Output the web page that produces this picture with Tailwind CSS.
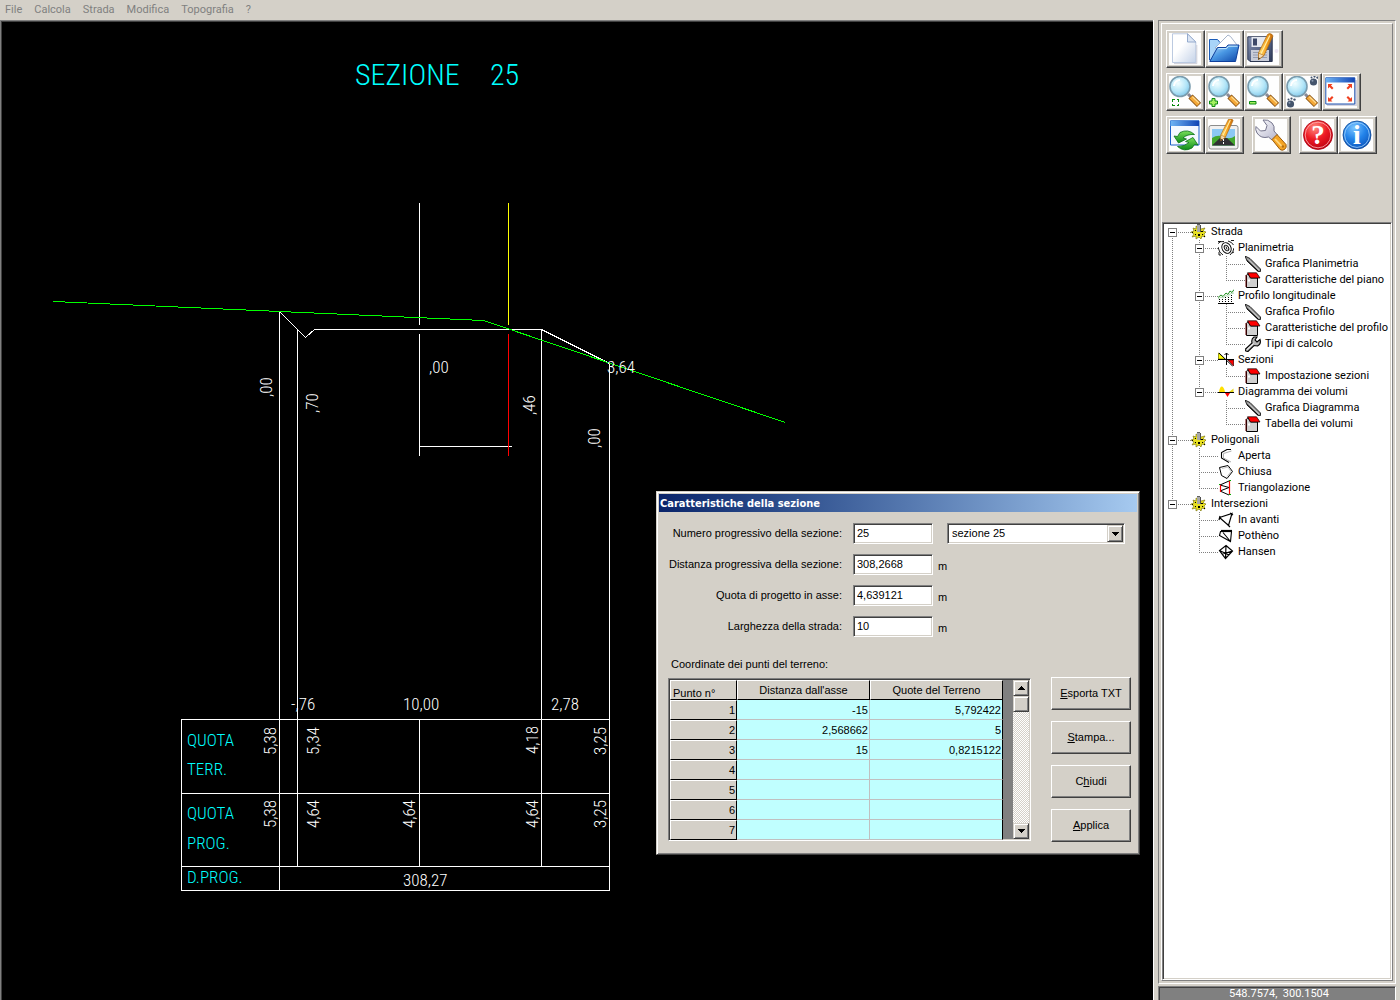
<!DOCTYPE html>
<html lang="it">
<head>
  <meta charset="UTF-8" />
  <meta name="viewport" content="width=device-width, initial-scale=1.0"/>
  <title>Sezione 25</title>
  <script src="https://cdn.jsdelivr.net/npm/@tailwindcss/browser@4"></script>
</head>

<body class="relative flex h-screen flex-col overflow-hidden bg-[#d4d0c8] font-['Roboto',sans-serif] text-[11px] text-black">

  <!-- Menu bar -->
  <nav class="flex h-5 shrink-0 items-center gap-3 px-[5px] text-[#808080]">
    <button>File</button>
    <button>Calcola</button>
    <button>Strada</button>
    <button>Modifica</button>
    <button>Topografia</button>
    <button>?</button>
  </nav>

  <div class="flex min-h-0 flex-1">

    <!-- Drawing area -->
    <main class="min-w-0 flex-1 overflow-hidden border-t border-l border-[#808080] bg-black pt-px pl-px shadow-[inset_1px_1px_0_#404040]">
      <svg class="block h-full w-full" fill="none" stroke-width="1">
        <g transform="translate(-2 -22)">
          <g shape-rendering="crispEdges" stroke="#fff">
            <path d="M419.5 203V325M419.5 334V456M419 446.5H512"/>
            <path d="M279.5 311.5L305.5 337.5L314.5 329.5H541.5L609.5 363.5"/>
            <path d="M279.5 311V890M297.5 329V866M541.5 329V866M609.5 363V890M419.5 719V866"/>
            <path d="M181.5 719.5H609.5V890.5H181.5ZM181 793.5H610M181 866.5H610"/>
            <path stroke="#ff0" d="M508.5 203V325"/>
            <path stroke="#f00" d="M508.5 334V456"/>
            <path stroke="#0f0" d="M53.5 301.5L483.5 320.5L785.5 422.5"/>
          </g>

          <g class="font-['Roboto_Condensed','Liberation_Sans_Narrow',sans-serif] text-[17px] font-light" fill="#fff">
            <text x="429" y="373">,00</text>
            <text x="607" y="373">3,64</text>
            <text x="291" y="710">-,76</text>
            <text x="403" y="710">10,00</text>
            <text x="551" y="710">2,78</text>
            <text x="403" y="886">308,27</text>
            <text transform="translate(272 397) rotate(-90)">,00</text>
            <text transform="translate(318 413) rotate(-90)">,70</text>
            <text transform="translate(535 415) rotate(-90)">,46</text>
            <text transform="translate(600 448) rotate(-90)">,00</text>
            <text transform="translate(276 755) rotate(-90)">5,38</text>
            <text transform="translate(319 755) rotate(-90)">5,34</text>
            <text transform="translate(538 754) rotate(-90)">4,18</text>
            <text transform="translate(606 755) rotate(-90)">3,25</text>
            <text transform="translate(276 828) rotate(-90)">5,38</text>
            <text transform="translate(319 828) rotate(-90)">4,64</text>
            <text transform="translate(415 828) rotate(-90)">4,64</text>
            <text transform="translate(538 828) rotate(-90)">4,64</text>
            <text transform="translate(606 828) rotate(-90)">3,25</text>
          </g>

          <g class="font-['Roboto_Condensed','Liberation_Sans_Narrow',sans-serif] text-[17px] font-light" fill="#0ff">
            <text x="355" y="85" class="text-[30px]">SEZIONE</text>
            <text x="490" y="85" class="text-[30px]">25</text>
            <text x="187" y="746">QUOTA</text>
            <text x="187" y="775">TERR.</text>
            <text x="187" y="819">QUOTA</text>
            <text x="187" y="849">PROG.</text>
            <text x="187" y="883">D.PROG.</text>
          </g>
        </g>
      </svg>
    </main>

    <!-- Side panel -->
    <aside class="flex w-[247px] shrink-0 flex-col border-l border-white pr-1 pl-1">
      <div class="flex min-h-0 flex-1 flex-col border border-t-[#808080] border-r-white border-b-white border-l-[#808080] p-[2px]">
        <div class="flex min-h-0 flex-1 flex-col border border-t-white border-r-[#808080] border-b-[#808080] border-l-white">

          <div id="toolbar" class="flex h-[198px] shrink-0 flex-col gap-[5px] px-1 pt-[6px]"></div>

          <div class="min-h-0 flex-1 overflow-hidden border border-t-[#808080] border-r-white border-b-white border-l-[#808080] bg-white pt-px pl-px shadow-[inset_1px_1px_0_#404040,inset_-1px_-1px_0_#d4d0c8]">
            <ul id="tree"></ul>
          </div>
        </div>
      </div>
      <div class="mt-[2px] h-[14px] shrink-0 border-t border-r border-l border-t-[#808080] border-r-white border-l-[#808080] bg-[#808080] pl-1 text-center leading-[14px] whitespace-pre text-white shadow-[inset_1px_1px_0_#404040]">548.7574,  300.1504</div>
    </aside>
  </div>

  <!-- Section dialog -->
  <section class="absolute top-[491px] left-[656px] w-[484px] border border-t-[#d4d0c8] border-r-[#404040] border-b-[#404040] border-l-[#d4d0c8] bg-[#d4d0c8] p-[2px] font-['Liberation_Sans',sans-serif] shadow-[inset_1px_1px_0_#fff,inset_-1px_-1px_0_#808080]">
    <h1 class="h-[18px] bg-linear-to-r from-[#0a246a] to-[#a6caf0] pl-px font-['DejaVu_Sans_Condensed',sans-serif] leading-5 font-bold text-white">Caratteristiche della sezione</h1>

    <div class="pt-[11px] pr-[6px] pb-[10px] pl-[9px]">
      <form class="flex">
        <div class="grid grid-cols-[180px_80px_9px] items-center gap-x-[5px] gap-y-[10px] whitespace-nowrap">
          <label for="numero" class="pr-[6px] text-right">Numero progressivo della sezione:</label>
          <input id="numero" value="25" class="h-[21px] border border-t-[#808080] border-r-white border-b-white border-l-[#808080] bg-white pr-1 pb-px pl-[3px] shadow-[inset_1px_1px_0_#404040,inset_-1px_-1px_0_#d4d0c8]">
          <span></span>
          <label for="distanza" class="pr-[6px] text-right">Distanza progressiva della sezione:</label>
          <input id="distanza" value="308,2668" class="h-[21px] border border-t-[#808080] border-r-white border-b-white border-l-[#808080] bg-white pr-1 pb-px pl-[3px] shadow-[inset_1px_1px_0_#404040,inset_-1px_-1px_0_#d4d0c8]">
          <span class="pt-1">m</span>
          <label for="quota" class="pr-[6px] text-right">Quota di progetto in asse:</label>
          <input id="quota" value="4,639121" class="h-[21px] border border-t-[#808080] border-r-white border-b-white border-l-[#808080] bg-white pr-1 pb-px pl-[3px] shadow-[inset_1px_1px_0_#404040,inset_-1px_-1px_0_#d4d0c8]">
          <span class="pt-1">m</span>
          <label for="larghezza" class="pr-[6px] text-right">Larghezza della strada:</label>
          <input id="larghezza" value="10" class="h-[21px] border border-t-[#808080] border-r-white border-b-white border-l-[#808080] bg-white pr-1 pb-px pl-[3px] shadow-[inset_1px_1px_0_#404040,inset_-1px_-1px_0_#d4d0c8]">
          <span class="pt-1">m</span>
        </div>
        <div class="relative h-[21px] w-[178px]">
          <select aria-label="Sezione" class="h-full w-full appearance-none border border-t-[#808080] border-r-white border-b-white border-l-[#808080] bg-white pl-1 shadow-[inset_1px_1px_0_#404040,inset_-1px_-1px_0_#d4d0c8]">
            <option>sezione 25</option>
          </select>
          <span class="pointer-events-none absolute top-[2px] right-[2px] flex h-[17px] w-4 items-center justify-center border border-t-[#d4d0c8] border-r-[#404040] border-b-[#404040] border-l-[#d4d0c8] bg-[#d4d0c8] shadow-[inset_1px_1px_0_#fff,inset_-1px_-1px_0_#808080]">
            <svg class="h-1 w-[7px]" viewBox="0 0 7 4" shape-rendering="crispEdges"><path d="M0 0H7V1H6V2H5V3H4V4H3V3H2V2H1V1H0Z"/></svg>
          </span>
        </div>
      </form>

      <p class="mt-5 pl-[3px] leading-[14px]">Coordinate dei punti del terreno:</p>

      <div class="mt-[6px] flex items-center justify-between">
        <div class="flex h-[163px] w-[363px] overflow-hidden border border-t-[#808080] border-r-white border-b-white border-l-[#808080] bg-[#808080] pt-px pl-px shadow-[inset_1px_1px_0_#404040,inset_-1px_-1px_0_#d4d0c8]">
          <table class="h-[160px] w-[333px] table-fixed border-separate border-spacing-0">
            <thead>
              <tr class="h-5">
                <th class="w-[67px] border border-t-white border-r-black border-b-black border-l-white bg-[#d4d0c8] p-0 pt-[6px] pl-[2px] text-left leading-3 font-normal">Punto n°</th>
                <th class="w-[133px] border border-t-white border-r-black border-b-black border-l-white bg-[#d4d0c8] p-0 leading-3 font-normal">Distanza dall'asse</th>
                <th class="w-[133px] border border-t-white border-r-black border-b-black border-l-white bg-[#d4d0c8] p-0 leading-3 font-normal">Quote del Terreno</th>
              </tr>
            </thead>
            <tbody id="punti"></tbody>
          </table>
          <div class="ml-[10px] flex h-[159px] w-4 flex-col bg-[repeating-conic-gradient(#fff_0_25%,#d4d0c8_0_50%)] bg-[length:2px_2px]">
            <button aria-label="Su" class="flex h-4 items-center justify-center border border-t-[#d4d0c8] border-r-[#404040] border-b-[#404040] border-l-[#d4d0c8] bg-[#d4d0c8] shadow-[inset_1px_1px_0_#fff,inset_-1px_-1px_0_#808080]">
              <svg class="h-1 w-[7px]" viewBox="0 0 7 4" shape-rendering="crispEdges"><path d="M0 4H7V3H6V2H5V1H4V0H3V1H2V2H1V3H0Z"/></svg>
            </button>
            <div class="mb-auto h-4 border border-t-[#d4d0c8] border-r-[#404040] border-b-[#404040] border-l-[#d4d0c8] bg-[#d4d0c8] shadow-[inset_1px_1px_0_#fff,inset_-1px_-1px_0_#808080]"></div>
            <button aria-label="Giù" class="flex h-4 items-center justify-center border border-t-[#d4d0c8] border-r-[#404040] border-b-[#404040] border-l-[#d4d0c8] bg-[#d4d0c8] shadow-[inset_1px_1px_0_#fff,inset_-1px_-1px_0_#808080]">
              <svg class="h-1 w-[7px]" viewBox="0 0 7 4" shape-rendering="crispEdges"><path d="M0 0H7V1H6V2H5V3H4V4H3V3H2V2H1V1H0Z"/></svg>
            </button>
          </div>
        </div>
        <div class="flex w-20 flex-col gap-[11px]">
          <button class="h-[33px] border border-t-white border-r-[#404040] border-b-[#404040] border-l-white shadow-[inset_-1px_-1px_0_#808080]"><u>E</u>sporta TXT</button>
          <button class="h-[33px] border border-t-white border-r-[#404040] border-b-[#404040] border-l-white shadow-[inset_-1px_-1px_0_#808080]"><u>S</u>tampa...</button>
          <button class="h-[33px] border border-t-white border-r-[#404040] border-b-[#404040] border-l-white shadow-[inset_-1px_-1px_0_#808080]">C<u>h</u>iudi</button>
          <button class="h-[33px] border border-t-white border-r-[#404040] border-b-[#404040] border-l-white shadow-[inset_-1px_-1px_0_#808080]"><u>A</u>pplica</button>
        </div>
      </div>
    </div>
  </section>

  <!-- Shared gradients -->
  <svg class="absolute h-0 w-0">
    <defs>
      <linearGradient id="gPage" x1="0" y1="0" x2="1" y2="1"><stop offset=".4" stop-color="#fff"/><stop offset="1" stop-color="#c4d2e8"/></linearGradient>
      <linearGradient id="gBlue" x1="0" y1="0" x2="1" y2="1"><stop offset="0" stop-color="#bfe4fb"/><stop offset=".45" stop-color="#4a98e4"/><stop offset="1" stop-color="#0e46a8"/></linearGradient>
      <linearGradient id="gBar" x1="0" y1="0" x2="1" y2="0"><stop offset="0" stop-color="#6fb4f4"/><stop offset="1" stop-color="#1245b4"/></linearGradient>
      <linearGradient id="gDisk" x1="0" y1="0" x2="1" y2="1"><stop offset="0" stop-color="#8492b4"/><stop offset="1" stop-color="#2c3858"/></linearGradient>
      <linearGradient id="gPencil" x1="0" y1="0" x2="1" y2="0"><stop offset="0" stop-color="#ffe07a"/><stop offset=".5" stop-color="#f9a825"/><stop offset="1" stop-color="#c86a08"/></linearGradient>
      <linearGradient id="gSteel" x1="0" y1="0" x2="1" y2="1"><stop offset="0" stop-color="#fff"/><stop offset="1" stop-color="#b4b4cc"/></linearGradient>
      <radialGradient id="gLens" cx=".4" cy=".35" r=".7"><stop offset="0" stop-color="#f2feff"/><stop offset=".6" stop-color="#b4e6f8"/><stop offset="1" stop-color="#7cc4e8"/></radialGradient>
      <radialGradient id="gRed" cx=".4" cy=".25" r=".8"><stop offset="0" stop-color="#ff8a80"/><stop offset=".5" stop-color="#ee1c24"/><stop offset="1" stop-color="#b80010"/></radialGradient>
      <radialGradient id="gInfo" cx=".4" cy=".25" r=".8"><stop offset="0" stop-color="#7cc4ff"/><stop offset=".5" stop-color="#2384ea"/><stop offset="1" stop-color="#0a50b8"/></radialGradient>
      <linearGradient id="gGreen" x1="0" y1="0" x2="0" y2="1"><stop offset="0" stop-color="#7ae05a"/><stop offset="1" stop-color="#0c8a18"/></linearGradient>
    </defs>
  </svg>

  <script>
    const lens = `
      <path d="M19 18L22.5 21.5" stroke="#8a8a96" stroke-width="3"/>
      <path d="M21.5 20.5L30 29" stroke="#8a5414" stroke-width="6"/>
      <path d="M22 21L29.5 28.5" stroke="#f4a838" stroke-width="4"/>
      <path d="M23.5 20.8L30 27" stroke="#ffdc90" stroke-width="1.2"/>
      <circle cx="11" cy="10.5" r="10" fill="url(#gLens)" stroke="#7a9cae" stroke-width="1.6"/>
      <path d="M5 10a6 6 0 0 1 6-6" stroke="#fff" stroke-width="2" fill="none"/>`;
    const pencil = `
      <path d="M20.5 1.5Q22.5-.5 25 1.5L26 3L17 22.5L11.5 26.5L11.5 20Z" fill="url(#gPencil)" stroke="#a86410" stroke-width=".7"/>
      <path d="M22.8 2.4L13.6 21.5" stroke="#fff0a8" stroke-width="1.2"/>
      <path d="M11.5 20L17 22.5L11.5 26.5Z" fill="#f4dcb4" stroke="#a86410" stroke-width=".6"/>
      <path d="M11.4 24.4L13.2 25.2L11.3 26.8Z" fill="#333"/>`;
    const bomb = (x, y) => `<g transform="translate(${x} ${y})" fill="#44546c"><circle r="3.6"/><circle cx="-2" cy="-4.6" r="1"/><circle cx="1" cy="-5.4" r="1.1"/><circle cx="4" cy="-4.4" r="1.2"/><circle cx="-1" cy="-1.2" r="1" fill="#8a9ab0"/></g>`;

    const tools = {
      Nuovo: `<path d="M3.5.8H18.5L26.8 9V29.5H3.5Z" fill="url(#gPage)" stroke="#b4c4dc" stroke-width=".9"/><path d="M18.5.8V9H26.8Z" fill="#dce6f4" stroke="#8ca4c8" stroke-width=".9"/><path d="M5 30.6H27.8V12" stroke="#c8c8d4" stroke-width=".9" fill="none"/>`,
      Apri: `<path d="M1.5 27V6.5H9.5L12 9.5H26V13L8 27Z" fill="#a8d4f8" stroke="#1c5cb8"/><path d="M7 15L20 2L22.5 3.5L29 12L24 17Z" fill="#fff" stroke="#9cacc4" stroke-width=".9"/><path d="M9.5 14.5H18L20 12H31L27.5 28.5H1.8Z" fill="url(#gBlue)" stroke="#0e3f9c"/><path d="M10.3 15.6H18.5L20.5 13.2H29.6" stroke="#c8ecff" fill="none"/>`,
      Salva: `<path d="M.8 3.8H25.2V28.5H3L.8 26.3Z" fill="url(#gDisk)" stroke="#2c3650"/><path d="M4.5 4H21V14H4.5Z" fill="#e4e8f0"/><path d="M6 5.5H10V12.5H6Z" fill="#3c4868"/><path d="M4 17H22V28H4Z" fill="#c8ccd8"/><path d="M6 19.5H20M6 22H20M6 24.5H20" stroke="#8890a8" stroke-width=".8"/><circle cx="29.5" cy="18" r="2" fill="#ece4f4"/>${pencil}`,
      'Zoom finestra': `${lens}<path d="M3.5 25.5V23.5H5.5M7.5 23.5H9.5V25.5M9.5 27.5V29.5H7.5M5.5 29.5H3.5V27.5" stroke="#0a8a10" fill="none" shape-rendering="crispEdges"/>`,
      'Zoom avanti': `${lens}<path d="M4.5 23.5H7.5V26H10V29H7.5V31.5H4.5V29H2V26H4.5Z" transform="translate(-.5 -1)" fill="#a4f060" stroke="#0a8a10"/>`,
      'Zoom indietro': `${lens}<path d="M2.5 25.5H9V28H2.5Z" fill="#a4f060" stroke="#0a8a10"/>`,
      'Zoom dinamico': `${lens}${bomb(27.5, 6)}${bomb(4.5, 28)}`,
      'Zoom estensione': `<path d="M2 4H32V30H2Z" fill="#d4d4e0"/><path d="M.8 1.8H29.8V28H.8Z" fill="#fff" stroke="#1c50b0"/><path d="M.8 1.8H29.8V6.5H.8Z" fill="url(#gBar)"/><g fill="#f04020"><path d="M3 8H7.5L6 9.5L8.5 12L7 13.5L4.5 11L3 12.5ZM27 8V12.5L25.5 11L23 13.5L21.5 12L24 9.5L22.5 8ZM3 25.5V21L4.5 22.5L7 20L8.5 21.5L6 24L7.5 25.5ZM27 25.5H22.5L24 24L21.5 21.5L23 20L25.5 22.5L27 21Z"/></g>`,
      Aggiorna: `<path d="M1.5 1.8H30V26H1.5Z" fill="#f4f8ff" stroke="#1c60c8"/><path d="M1.5 1.8H30V7H1.5Z" fill="url(#gBar)"/><g fill="url(#gGreen)" stroke="#087014" stroke-width=".8"><path d="M25.5 15.5Q19 9.5 11 13.5L8.5 17.5L5 17L9.5 24L17.5 20L14 19Q18 15 25.5 15.5Z"/><path d="M8.5 27.5Q15 33.5 23 29L25.5 25.5L29 26L24 18.5L16.5 22.5L20 23.5Q16 27.5 8.5 27.5Z"/></g>`,
      Immagine: `<rect x="1" y="6.5" width="29" height="23.5" rx="2" fill="#f0f0f0" stroke="#8c8c8c"/><path d="M4 10H27V26.5H4Z" fill="#8cc8f4"/><path d="M4 19Q10 15 16 18T27 17V26.5H4Z" fill="#44a830"/><path d="M4 26.5L12 19H19L27 26.5Z" fill="#303034"/><path d="M15.5 20V26" stroke="#fff" stroke-dasharray="2 1"/><g transform="translate(3 -1) scale(.85)">${pencil}</g>`,
      Opzioni: `<path d="M8 1Q13 0 17 4Q20 7 19 12L22.5 16L17 21L13.5 18Q6 20 2 14Q0 10.5 1 7.5L5.5 12L10.5 11.5L12 6.5Z" fill="url(#gSteel)" stroke="#74748c"/><path d="M17 20.5L22 15.5L31 25.5Q32 28.5 29.5 30.5Q27 32 25 30.5Z" fill="#f4a424" stroke="#9c5c0c"/><path d="M20 20L27.5 28" stroke="#ffd880" stroke-width="1.8"/><circle cx="27.8" cy="27.5" r="1.3" fill="#b87010"/>`,
      Aiuto: `<circle cx="16" cy="16" r="14.5" fill="url(#gRed)" stroke="#a80010" stroke-width=".8"/><circle cx="16" cy="16" r="12.8" fill="none" stroke="#ffb4b4" stroke-width=".8"/><text x="16" y="24.5" text-anchor="middle" font-family="Liberation Serif" font-weight="700" font-size="27" fill="#fff">?</text>`,
      Informazioni: `<circle cx="16" cy="16" r="14" fill="url(#gInfo)" stroke="#0c4490" stroke-width=".8"/><circle cx="16" cy="16" r="12.4" fill="none" stroke="#a8d8ff" stroke-width=".8"/><text x="16" y="25" text-anchor="middle" font-family="Liberation Serif" font-weight="700" font-size="28" fill="#fff">i</text>`
    };

    // each row is a list of button groups
    const toolRows = [
      [['Nuovo', 'Apri', 'Salva']],
      [['Zoom finestra', 'Zoom avanti', 'Zoom indietro', 'Zoom dinamico', 'Zoom estensione']],
      [['Aggiorna', 'Immagine'], ['Opzioni'], ['Aiuto', 'Informazioni']]
    ];

    document.getElementById('toolbar').innerHTML = toolRows.map(row => `
      <div class="flex gap-2">${row.map(group => `
        <div class="flex">${group.map(name => `
          <button title="${name}" aria-label="${name}" class="h-[38px] w-[39px] border border-t-white border-r-[#404040] border-b-[#404040] border-l-white p-[2px] shadow-[inset_-1px_-1px_0_#808080]">
            <svg class="block h-8 w-8 bg-[#fefefe]" viewBox="0 0 32 32" fill="none">${tools[name]}</svg>
          </button>`).join('')}
        </div>`).join('')}
      </div>`).join('');

    const icons = {
      gear: `<path d="M7 3L5 2L5 5L2 4L3 7L0 8L3 10L1 13L5 12L5 15L8 13L10 15L11 12L14 13L13 10L15 8L12 7L14 4L10 5Z" fill="#e8e020" stroke="#706800" stroke-width=".6"/><path d="M4 6H5V7H4ZM10 7H12V8H10ZM4 10H5V11H4ZM7 10H9V12H7ZM11 10H12V11H11ZM1 8H2V9H1ZM13 12H14V13H13Z" fill="#000"/><path d="M6 1H9V8H6Z" fill="#a8a8a8"/><path d="M9.5 1V8" stroke="#505050"/><path d="M6 .5H9" stroke="#606060"/>`,
      plan: `<g stroke="#000" stroke-width=".9"><ellipse cx="8.5" cy="8" rx="2" ry="3" transform="rotate(-30 8.5 8)"/><ellipse cx="8.5" cy="8" rx="4.4" ry="5.6" transform="rotate(-30 8.5 8)"/><path d="M8 6.5L9 9.5M0 3.5Q2 1 6 1.5M0 7Q1 13 5 15M10 1Q14 2 15.5 5M16 8Q15.5 12 12 15M0 1.500H3M13 .5H16M14 13L16 12M1 12V15H3"/></g>`,
      pen: `<path d="M0 0L2 5L13 15.5H15.5V13L5 2.5Z" fill="#989898" stroke="#000" stroke-width=".8"/><path d="M3.5 3.5L14 14" stroke="#d0d0d0" stroke-width=".8"/><path d="M2 4.5L13 15" stroke="#000" stroke-width="1"/>`,
      book: `<path d="M1.5 3.5L3 1.5L5.5 6H12.5V15.5H1.5Z" fill="#d0d0d0" stroke="#000"/><path d="M3 7.5H5V9.5H3Z" fill="#fff"/><path d="M2.500 .8H11.500L15 6H5.500Z" fill="#f00" stroke="#000" stroke-width=".7"/><path d="M1 3V15" stroke="#600000"/>`,
      chart: `<path d="M0 9.500L3 7L5 8.500L8 5L10 6.500L12 3L14 4.500L16 1.500" stroke="#008000" stroke-width=".9"/><path d="M0 11L3 9L5 10L8 7.500L10 8.500L12 6L16 5" stroke="#80c080" stroke-width=".6"/><path d="M0 15.500H16" stroke="#000"/><path d="M1.5 11V14M4.5 11V14M7.5 9V14M10.5 9V14M13.5 7V14" stroke="#000" stroke-dasharray="1 1"/>`,
      wrench: `<path d="M.8 15L0 13.5L7 7Q6 3 9 1L12 1L10 4L12 6L15 3.5Q16.5 8 12.5 10L9 9.5L3 15.5Z" fill="#b8b8b8" stroke="#000" stroke-width="1.1"/><path d="M2 13.5L8.5 7.5" stroke="#fff"/>`,
      section: `<path d="M.5 1V7H7Z" fill="#ff0" stroke="#808000" stroke-width=".8"/><path d="M10 8H15.5V14Z" fill="#f00" stroke="#600000" stroke-width=".8"/><path d="M8.5 13V1M6.5 3L8.5 1L10.5 3M0 7.5H16M1 1L14.5 14" stroke="#000"/>`,
      volume: `<path d="M1 8Q2 2 4 2.5Q6 3 7 8Z" fill="#ffe000"/><path d="M11 8L15.5 4.5V8Z" fill="#e8d820"/><path d="M7 9H12L9.5 13Z" fill="#f00"/><path d="M0 8.5H16" stroke="#000"/>`,
      open: `<path d="M13 1.5H9L3.5 4.5V10L11 14.5" stroke="#000" stroke-width="1.1"/><path d="M13.5 3L5.5 5.5V10L13 14" stroke="#b0b0b0"/>`,
      closed: `<path d="M1.500 3.5L10 1.500L14.500 7.500L9 14.5L3.500 11.500Z" stroke="#000"/><path d="M4 4.5L10 3L13 7.500L9 12.500" stroke="#b8b8b8" stroke-width=".8"/>`,
      tri: `<path d="M2 5L11 1M2 11L11 15M2 11L11 7.5L2 5" stroke="#000"/><path d="M2.5 5V12M11.5 1V15" stroke="#f00" stroke-width="1.2"/><path d="M11 0H13V1H11ZM11 14H13V15H11ZM1 4H2V5H1Z" fill="#0a0"/>`,
      forward: `<path d="M1.5 5.5L14 1.5L10.5 13.5L1.5 5.5M12 1L15 3M9 12L12 15M2 4L1 8" stroke="#000" stroke-width="1.2"/>`,
      pot: `<path d="M2.5 3.5H13.5L12.5 13.5L1.5 7.5ZM5 4.5L12.5 13.5" stroke="#000" stroke-width="1.1"/><path d="M3 3H14" stroke="#000" stroke-width="2.2"/>`,
      hansen: `<path d="M8 1.5L14.5 7L7.5 14.5L1.5 6.5ZM8 1.5L7.5 14.5M1.5 6.5L11 11M14.5 7L4.5 10" stroke="#000" stroke-width="1.2"/>`
    };

    // guide cells: v through, t branch, l last branch, _ blank
    // expander cells: b line below, m line both ways, u line above
    const nodes = [
      ['b', 'gear', 'Strada'],
      ['vm', 'plan', 'Planimetria'],
      ['vvt', 'pen', 'Grafica Planimetria'],
      ['vvl', 'book', 'Caratteristiche del piano'],
      ['vm', 'chart', 'Profilo longitudinale'],
      ['vvt', 'pen', 'Grafica Profilo'],
      ['vvt', 'book', 'Caratteristiche del profilo'],
      ['vvl', 'wrench', 'Tipi di calcolo'],
      ['vm', 'section', 'Sezioni'],
      ['vvl', 'book', 'Impostazione sezioni'],
      ['vu', 'volume', 'Diagramma dei volumi'],
      ['v_t', 'pen', 'Grafica Diagramma'],
      ['v_l', 'book', 'Tabella dei volumi'],
      ['m', 'gear', 'Poligonali'],
      ['vt', 'open', 'Aperta'],
      ['vt', 'closed', 'Chiusa'],
      ['vl', 'tri', 'Triangolazione'],
      ['u', 'gear', 'Intersezioni'],
      ['_t', 'forward', 'In avanti'],
      ['_t', 'pot', 'Pothèno'],
      ['_l', 'hansen', 'Hansen']
    ];

    const guides = {
      v: 'M8.5 0V16',
      t: 'M8.5 0V16M10 8.5H27',
      l: 'M8.5 0V9M10 8.5H27',
      b: 'M8.5 14V16M14 8.5H27',
      m: 'M8.5 0V4M8.5 14V16M14 8.5H27',
      u: 'M8.5 0V4M14 8.5H27',
      _: ''
    };

    document.getElementById('tree').innerHTML = nodes.map(([cells, icon, label]) => `
      <li class="flex h-4 items-center whitespace-nowrap">
        ${[...cells].map(c => `
          <svg class="h-4 w-[27px] shrink-0" viewBox="0 0 27 16" fill="none" shape-rendering="crispEdges">
            <path d="${guides[c]}" stroke="#808080" stroke-dasharray="1 1"/>
            ${'bmu'.includes(c) ? '<path d="M4.5 4.5H12.5V12.5H4.5Z" fill="#fff" stroke="#808080"/><path d="M6 8.5H11" stroke="#000"/>' : ''}
          </svg>`).join('')}
        <svg class="h-4 w-4 shrink-0" viewBox="0 0 16 16" fill="none">${icons[icon]}</svg>
        <a href="#" class="pl-1">${label}</a>
      </li>`).join('');

    const punti = [['-15', '5,792422'], ['2,568662', '5'], ['15', '0,8215122'], ['', ''], ['', ''], ['', ''], ['', '']];

    document.getElementById('punti').innerHTML = punti.map(([d, q], i) => `
      <tr class="h-5 text-right leading-3">
        <th class="border border-t-white border-r-black border-b-black border-l-white bg-[#d4d0c8] p-0 pr-px font-normal">${i + 1}</th>
        <td class="border-r border-b border-[#c0c0c0] bg-[#c0ffff] p-0 pr-px">${d}</td>
        <td class="border-r border-b border-r-black border-b-[#c0c0c0] bg-[#c0ffff] p-0 pr-px">${q}</td>
      </tr>`).join('');
  </script>

</body>
</html>
